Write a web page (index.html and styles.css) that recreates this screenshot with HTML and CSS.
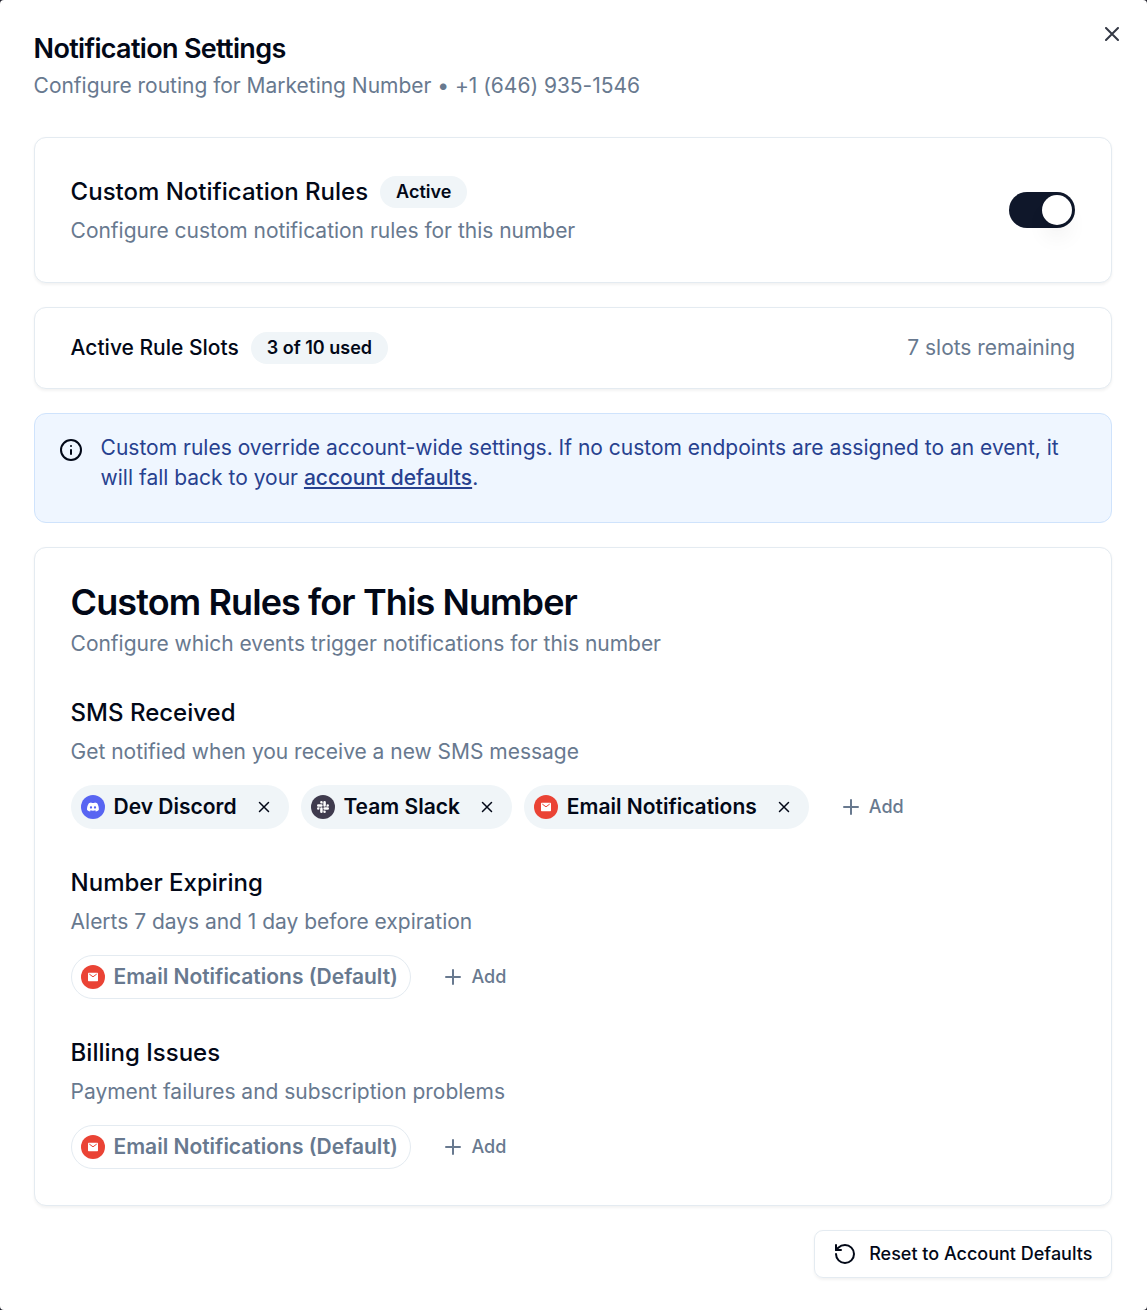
FILE: index.html
```html
<!DOCTYPE html>
<html lang="en">
<head>
<meta charset="utf-8">
<title>Notification Settings</title>
<link rel="stylesheet" href="styles.css">
</head>
<body>
<svg width="0" height="0" class="sprite" aria-hidden="true">
  <symbol id="x" viewBox="0 0 24 24"><path d="M18 6 6 18M6 6l12 12"/></symbol>
  <symbol id="plus" viewBox="0 0 24 24"><path d="M5 12h14M12 5v14"/></symbol>
  <symbol id="mail" viewBox="0 0 24 24"><circle cx="12" cy="12" r="12" fill="#ea4335"/><rect x="7" y="7.7" width="10" height="8.6" rx=".7" fill="#fff"/><path d="m8.3 9.1 3.7 2.7 3.7-2.7" fill="none" stroke="#ea4335" stroke-width="1"/></symbol>
  <symbol id="discord" viewBox="0 0 24 24"><circle cx="12" cy="12" r="12" fill="#5865f2"/><path transform="translate(6 6) scale(.5)" fill="#fff" d="M20.3 4.4A19.8 19.8 0 0 0 15.4 2.9c-.2.4-.5.9-.6 1.2a18.3 18.3 0 0 0-5.5 0c-.2-.4-.4-.8-.6-1.2a19.7 19.7 0 0 0-4.9 1.5C.5 9-.3 13.6.1 18.1a19.9 19.9 0 0 0 6 3c.5-.6.9-1.3 1.2-2a13 13 0 0 1-1.900-.9l.4-.3a14.200 14.200 0 0 0 12.100 0l.4.3a12.300 12.300 0 0 1-1.900.9c.4.7.8 1.4 1.200 2a19.800 19.800 0 0 0 6-3c.5-5.200-.8-9.700-3.300-13.700ZM8 15.300c-1.200 0-2.200-1.100-2.200-2.400s1-2.400 2.200-2.400 2.200 1.100 2.200 2.400-1 2.400-2.200 2.400Zm8 0c-1.200 0-2.200-1.100-2.200-2.400s1-2.400 2.200-2.400 2.200 1.100 2.200 2.400-1 2.400-2.200 2.400Z"/></symbol>
  <symbol id="slack" viewBox="0 0 24 24"><circle cx="12" cy="12" r="12" fill="#3f3b4e"/><path transform="translate(6 6) scale(.5)" fill="#fff" d="M5.042 15.165a2.528 2.528 0 0 1-2.520 2.523A2.528 2.528 0 0 1 0 15.165a2.527 2.527 0 0 1 2.522-2.520h2.520v2.520zM6.313 15.165a2.527 2.527 0 0 1 2.521-2.520 2.527 2.527 0 0 1 2.521 2.520v6.313A2.528 2.528 0 0 1 8.834 24a2.528 2.528 0 0 1-2.521-2.522v-6.313zM8.834 5.042a2.528 2.528 0 0 1-2.521-2.520A2.528 2.528 0 0 1 8.834 0a2.528 2.528 0 0 1 2.521 2.522v2.520H8.834zM8.834 6.313a2.528 2.528 0 0 1 2.521 2.521 2.528 2.528 0 0 1-2.521 2.521H2.522A2.528 2.528 0 0 1 0 8.834a2.528 2.528 0 0 1 2.522-2.521h6.312zM18.956 8.834a2.528 2.528 0 0 1 2.522-2.521A2.528 2.528 0 0 1 24 8.834a2.528 2.528 0 0 1-2.522 2.521h-2.522V8.834zM17.688 8.834a2.528 2.528 0 0 1-2.523 2.521 2.527 2.527 0 0 1-2.520-2.521V2.522A2.527 2.527 0 0 1 15.165 0a2.528 2.528 0 0 1 2.523 2.522v6.312zM15.165 18.956a2.528 2.528 0 0 1 2.523 2.522A2.528 2.528 0 0 1 15.165 24a2.527 2.527 0 0 1-2.520-2.522v-2.522h2.520zM15.165 17.688a2.527 2.527 0 0 1-2.520-2.523 2.526 2.526 0 0 1 2.520-2.520h6.313A2.527 2.527 0 0 1 24 15.165a2.528 2.528 0 0 1-2.522 2.523h-6.313z"/></symbol>
</svg>
<main class="dialog">
  <button class="close" aria-label="Close"><svg class="icon"><use href="#x"/></svg></button>
  <header class="header">
    <h1 class="dialog-title">Notification Settings</h1>
    <p class="muted">Configure routing for Marketing Number • +1 (646) 935-1546</p>
  </header>

  <section class="card card-toggle">
    <div class="stack">
      <div class="row"><h2 class="label">Custom Notification Rules</h2><span class="badge">Active</span></div>
      <p class="muted">Configure custom notification rules for this number</p>
    </div>
    <button class="switch" role="switch" aria-checked="true" aria-label="Custom rules"><span class="thumb"></span></button>
  </section>

  <section class="card card-slots">
    <div class="row"><span class="slots-label">Active Rule Slots</span><span class="badge">3 of 10 used</span></div>
    <span class="muted">7 slots remaining</span>
  </section>

  <section class="alert">
    <svg class="icon alert-icon" viewBox="0 0 24 24"><circle cx="12" cy="12" r="10"/><path d="M12 16v-4M12 8h.01"/></svg>
    <p class="alert-text">Custom rules override account-wide settings. If no custom endpoints are assigned to an event, it will fall back to your <a class="link">account defaults</a>.</p>
  </section>

  <section class="card card-rules">
    <div class="rules-head">
      <h2 class="rules-title">Custom Rules for This Number</h2>
      <p class="muted">Configure which events trigger notifications for this number</p>
    </div>
    <div class="rule">
      <h3 class="label">SMS Received</h3>
      <p class="muted">Get notified when you receive a new SMS message</p>
      <div class="chips">
        <span class="chip"><svg class="logo"><use href="#discord"/></svg>Dev Discord<svg class="icon remove"><use href="#x"/></svg></span>
        <span class="chip"><svg class="logo"><use href="#slack"/></svg>Team Slack<svg class="icon remove"><use href="#x"/></svg></span>
        <span class="chip"><svg class="logo"><use href="#mail"/></svg>Email Notifications<svg class="icon remove"><use href="#x"/></svg></span>
        <button class="add"><svg class="icon"><use href="#plus"/></svg>Add</button>
      </div>
    </div>
    <div class="rule">
      <h3 class="label">Number Expiring</h3>
      <p class="muted">Alerts 7 days and 1 day before expiration</p>
      <div class="chips">
        <span class="chip chip-default"><svg class="logo"><use href="#mail"/></svg>Email Notifications (Default)</span>
        <button class="add"><svg class="icon"><use href="#plus"/></svg>Add</button>
      </div>
    </div>
    <div class="rule">
      <h3 class="label">Billing Issues</h3>
      <p class="muted">Payment failures and subscription problems</p>
      <div class="chips">
        <span class="chip chip-default"><svg class="logo"><use href="#mail"/></svg>Email Notifications (Default)</span>
        <button class="add"><svg class="icon"><use href="#plus"/></svg>Add</button>
      </div>
    </div>
  </section>

  <footer class="footer">
    <button class="reset"><svg class="icon" viewBox="0 0 24 24"><path d="M3 12a9 9 0 1 0 9-9 9.750 9.750 0 0 0-6.740 2.740L3 8"/><path d="M3 3v5h5"/></svg>Reset to Account Defaults</button>
  </footer>
</main>
</body>
</html>
```
FILE: styles.css
```css
* { box-sizing: border-box; margin: 0; }
body { background: #20202c; font-family: Inter, sans-serif; color: #020817; }
button { font: inherit; color: inherit; background: none; border: 0; padding: 0; }
.sprite { position: absolute; }
.dialog { position: relative; height: 1310px; padding: 34.6px 35px 0 33.6px; background: #fff; border-radius: 4px; }
.icon { width: 24px; height: 24px; flex: none; fill: none; stroke: currentColor; stroke-width: 2; stroke-linecap: round; stroke-linejoin: round; }
.close { position: absolute; top: 22px; right: 23px; width: 24px; height: 24px; opacity: .8; }
.close .icon { display: block; }
.header { display: flex; flex-direction: column; gap: 9px; margin-bottom: 36px; }
.dialog-title { font-size: 27px; line-height: 27px; font-weight: 600; letter-spacing: -.025em; }
.muted { font-size: 21px; line-height: 30px; color: #68798f; letter-spacing: -.001em; }
.card { border: 1px solid #e4ebf1; border-radius: 12px; background: #fff; box-shadow: 0 1.5px 3px rgba(0, 0, 0, .05); margin-bottom: 24px; }
.card-toggle { display: flex; align-items: center; justify-content: space-between; padding: 36px; }
.stack { display: flex; flex-direction: column; gap: 6px; }
.row { display: flex; align-items: center; gap: 12px; }
.label { font-size: 24px; line-height: 36px; font-weight: 500; }
.badge { height: 32px; padding: 0 16px; border-radius: 16px; background: #f0f5f8; font-size: 18px; line-height: 32px; font-weight: 600; }
.switch { width: 66px; height: 36px; padding: 3px; border-radius: 18px; background: #0f172a; display: flex; justify-content: flex-end; }
.thumb { width: 30px; height: 30px; border-radius: 50%; background: #fff; box-shadow: 0 15px 22px -4px rgba(0, 0, 0, .08), 0 6px 9px -6px rgba(0, 0, 0, .08); }
.card-slots { display: flex; align-items: center; justify-content: space-between; padding: 24px 36px; }
.slots-label { font-size: 21px; line-height: 30px; font-weight: 500; }
.alert { display: flex; gap: 18px; height: 110px; padding: 19px 24px; margin-bottom: 24px; border: 1px solid #cfe3fc; border-radius: 12px; background: #eff6ff; }
.alert-icon { margin-top: 5px; }
.alert-text { font-size: 21px; line-height: 30px; color: #27418f; }
.link { font-weight: 500; text-decoration: underline; }
.card-rules { display: flex; flex-direction: column; gap: 36px; padding: 36px; }
.rules-head { display: flex; flex-direction: column; gap: 9px; }
.rules-title { font-size: 36px; line-height: 36px; font-weight: 600; letter-spacing: -.025em; }
.rule { display: flex; flex-direction: column; gap: 6px; }
.chips { display: flex; align-items: center; gap: 12px; margin-top: 12px; }
.chip { display: flex; align-items: center; height: 44px; padding: 0 16px 0 10.4px; border-radius: 22px; background: #f0f5f8; font-size: 21px; line-height: 30px; font-weight: 600; }
.logo { width: 24px; height: 24px; margin-right: 8.5px; }
.remove { width: 18px; height: 18px; margin-left: 18px; }
.chip-default { padding: 0 12.5px 0 9.4px; border: 1px solid #e4ebf1; background: #fff; color: #68798f; }
.add { display: flex; align-items: center; gap: 6px; padding: 0 18px; font-size: 18px; line-height: 24px; font-weight: 500; color: #68798f; }
.footer { display: flex; justify-content: flex-end; }
.reset { display: flex; align-items: center; gap: 12px; height: 48px; padding: 0 18.600px 0 18px; border: 1px solid #e4ebf1; border-radius: 9px; font-size: 18px; font-weight: 500; box-shadow: 0 1.5px 3px rgba(0, 0, 0, .05); }
```
